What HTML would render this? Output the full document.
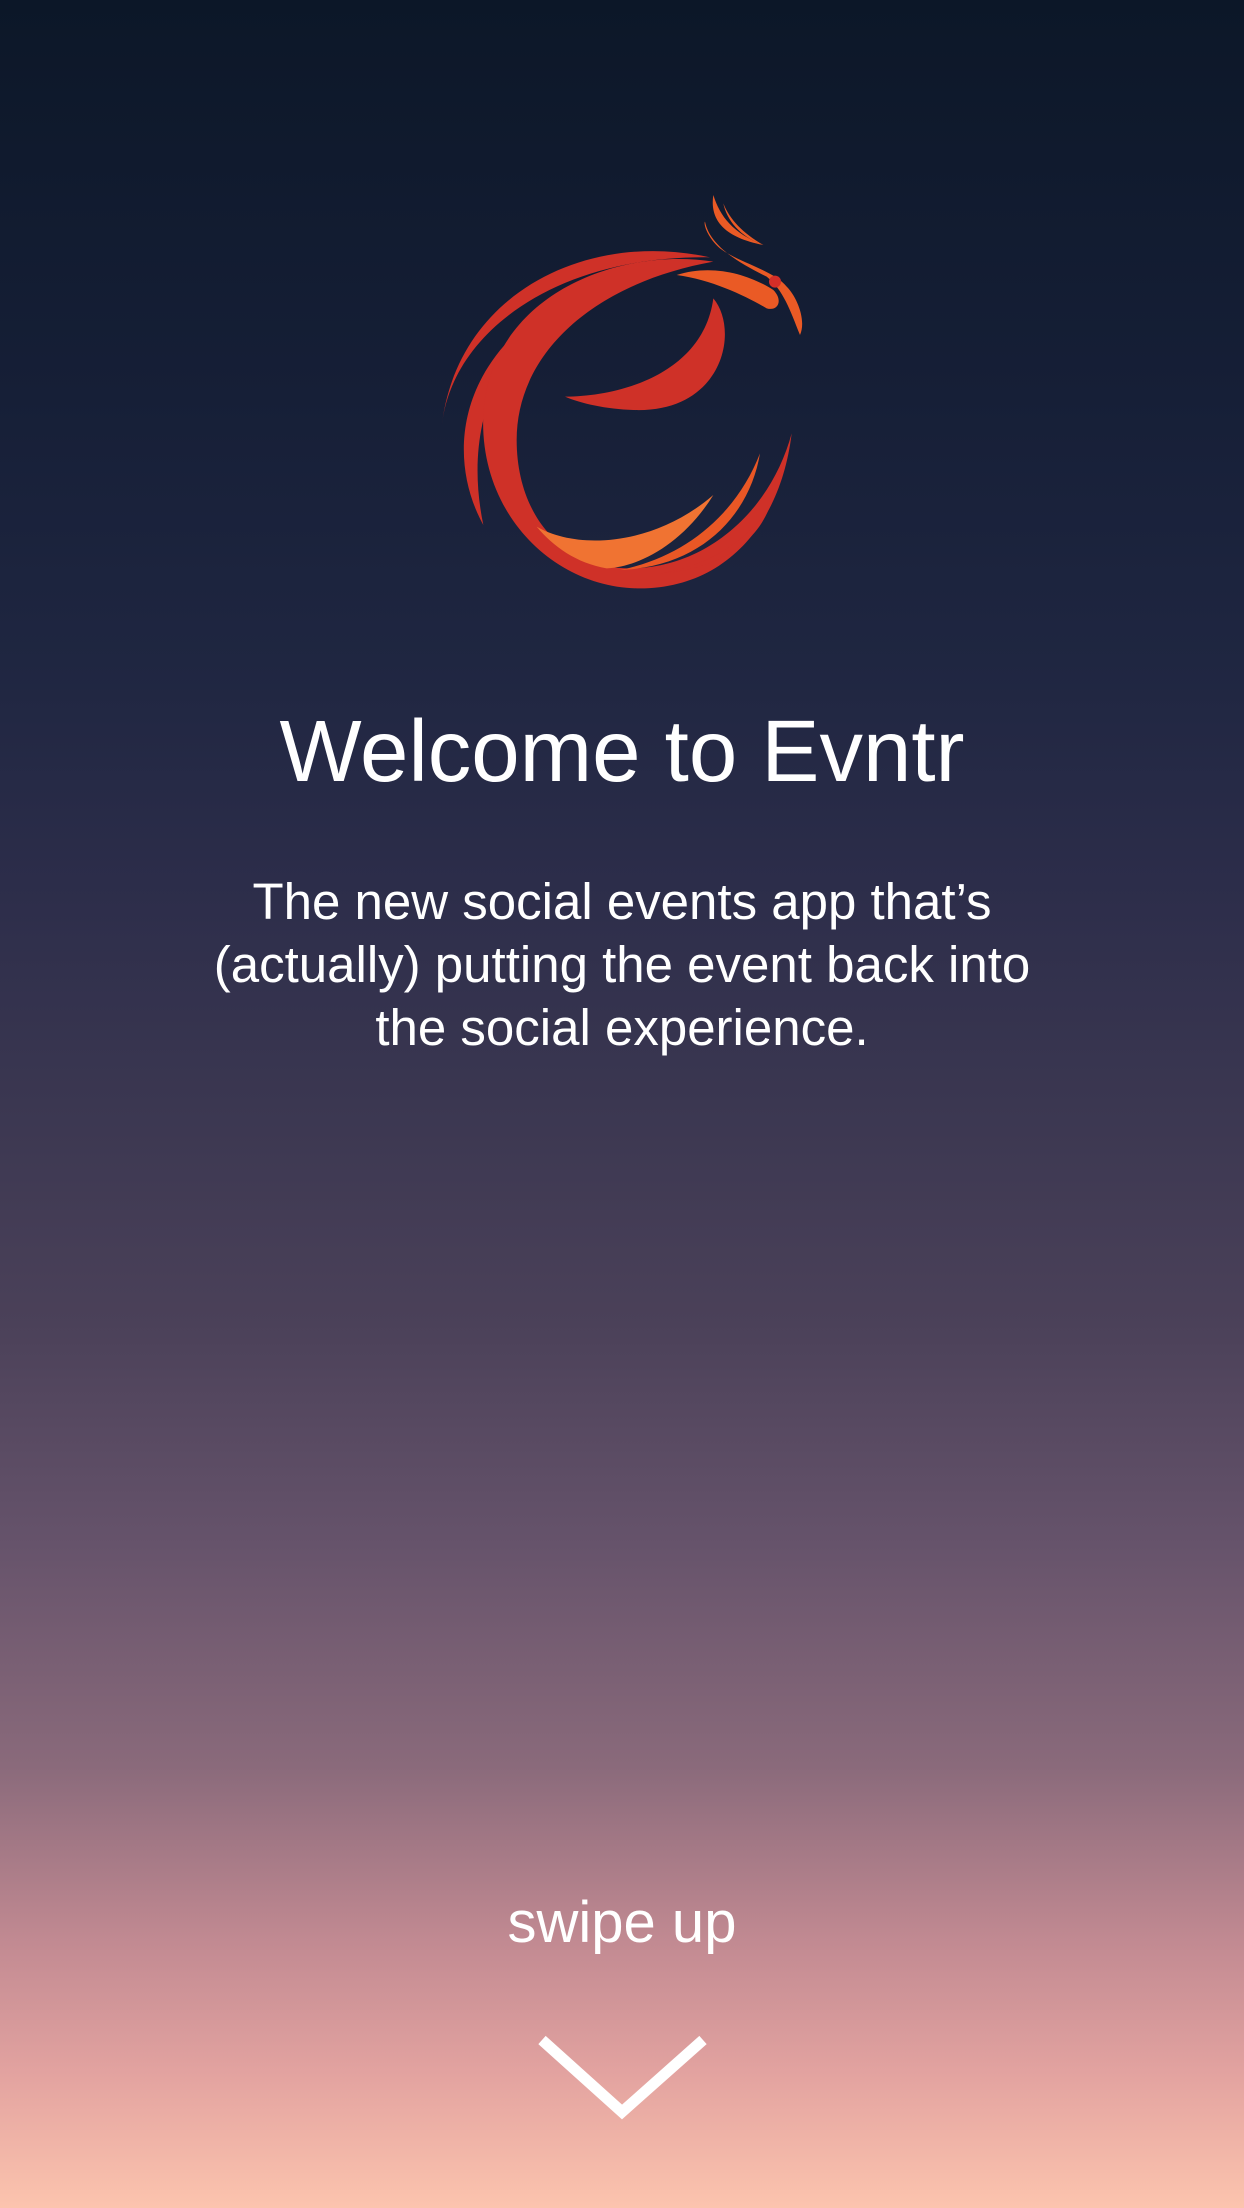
<!DOCTYPE html>
<html><head><meta charset="utf-8"><style>
html,body{margin:0;padding:0;}
body{width:1244px;height:2208px;position:relative;overflow:hidden;
background:linear-gradient(180deg,#0c1728 0%,#161f37 18%,#1f2641 30%,#2c2d4a 40%,#3b3751 50%,#4b4159 60%,#66536b 70%,#8a6a7b 80%,#c28a92 88%,#e3a3a0 94%,#fcc4ae 100%);
font-family:"Liberation Sans",sans-serif;color:#fff;}
.t{position:absolute;left:0;width:1244px;text-align:center;}
</style></head><body>
<svg style="position:absolute;left:420px;top:180px" width="400" height="420" viewBox="0 0 1200 1260">
<path d="M870 232 C500 150 110 340 65 740 C95 450 420 225 870 232 Z" fill="#cf3128"/>
<path d="M190 1035 C60 800 110 400 720 238 C310 340 110 650 190 1035 Z" fill="#cf3128"/>
<path d="M880 245 C600 200 215 340 190 700 C175 1000 400 1220 650 1225 C900 1230 1080 1050 1115 760 C1050 1000 850 1170 620 1165 C420 1160 290 1000 290 780 C290 520 520 310 880 245 Z" fill="#cf3128"/>
<path d="M350 1040 C470 1110 700 1100 880 945 C790 1090 660 1160 560 1165 C470 1150 400 1100 350 1040 Z" fill="#f07332"/>
<path d="M1020 820 C950 1000 800 1130 600 1170 C850 1160 990 1000 1020 820 Z" fill="#e95725"/>
<path d="M1045 990 C960 1100 850 1160 720 1180 C880 1170 1000 1100 1045 990 Z" fill="#cf3128"/>
<path d="M880 355 C960 450 910 700 640 690 C560 688 480 670 435 650 C600 650 850 580 880 355 Z" fill="#cf3128"/>
<path d="M770 285 C880 250 990 285 1060 330 C1090 360 1075 395 1040 385 C980 350 880 300 770 285 Z" fill="#ea5a25"/>
<path d="M1140 465 C1160 420 1130 350 1100 320 C1060 270 960 250 900 205 C860 170 850 130 855 125 C870 200 960 250 1040 290 C1090 330 1110 390 1140 465 Z" fill="#ea5a25"/>
<path d="M880 45 C870 110 900 170 1030 195 C940 160 900 110 880 45 Z" fill="#ea5a25"/>
<path d="M910 70 C920 120 960 170 1030 195 C970 160 930 120 910 70 Z" fill="#ea5a25"/>
<circle cx="1065" cy="305" r="18" fill="#d42e28"/>
</svg>
<div class="t" style="top:702px;font-size:87px;line-height:100px;">Welcome to Evntr</div>
<div class="t" style="top:870px;font-size:51px;line-height:63px;">The new social events app that’s<br>(actually) putting the event back into<br>the social experience.</div>
<div class="t" style="top:1891px;font-size:58px;line-height:64px;">swipe up</div>
<svg style="position:absolute;left:530px;top:2025px" width="185" height="105" viewBox="0 0 185 105">
<polyline points="12,15 92,87 173,15" fill="none" stroke="#fff" stroke-width="11"/>
</svg>
</body></html>
